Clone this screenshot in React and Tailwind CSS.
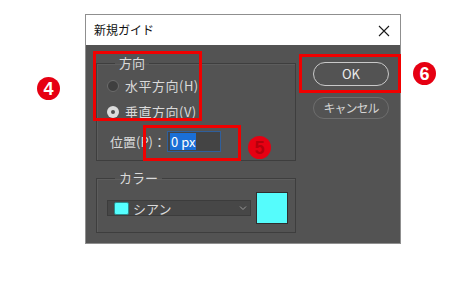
const FONT = { fontFamily: '"Noto Sans CJK JP", "Noto Sans", sans-serif' };

function Radio({ checked }) {
  return checked ? (
    <span className="flex h-[12px] w-[12px] items-center justify-center rounded-full bg-[#dcdcdc]">
      <span className="h-[4px] w-[4px] rounded-full bg-[#505050]" />
    </span>
  ) : (
    <span className="h-[12px] w-[12px] rounded-full border border-[#6b6b6b] bg-[#3f3f3f]" />
  );
}

function Badge({ n, className, digit = "text-white" }) {
  return (
    <div
      className={`absolute flex h-[23px] w-[23px] items-center justify-center rounded-full bg-[#e60012] text-[18px] font-bold leading-none ${digit} ${className}`}
      style={{ fontFamily: '"Liberation Sans", Arial, sans-serif' }}
    >
      {n}
    </div>
  );
}

export default function App() {
  return (
    <div className="relative h-[287px] w-[476px] overflow-hidden bg-white pl-[85px] pt-[14px]" style={FONT}>
      {/* Dialog */}
      <div className="flex w-[316px] flex-col border border-[#8f8f8f]">
        <div className="flex h-[30px] items-center justify-between bg-white pl-[8px] pr-[10px]">
          <span className="text-[12px] text-[#111]">新規ガイド</span>
          <svg width="12" height="12" viewBox="0 0 12 12" className="mt-[1px]">
            <path d="M1 1L11 11M11 1L1 11" stroke="#1a1a1a" strokeWidth="1.1" />
          </svg>
        </div>

        <div className="flex bg-[#535353] pb-[10px] pl-[10px] pr-[11px] pt-[10px] text-[13px] text-[#dadada]">
          <div className="flex w-[200px] flex-col gap-[9px]">
            <fieldset className="border border-[#3e3e3e] pb-[8px] pt-[5px] shadow-[inset_1px_1px_0_#5d5d5d]">
              <legend className="ml-[18px] px-[4px] leading-[16px]">方向</legend>
              <div className="flex flex-col">
                <div className="flex h-[20px] items-center gap-[6px] pl-[10px]">
                  <Radio />
                  <span className="tracking-[0.5px]">水平方向(H)</span>
                </div>
                <div className="mt-[6px] flex h-[20px] items-center gap-[6px] pl-[10px]">
                  <Radio checked />
                  <span className="tracking-[0.5px]">垂直方向(V)</span>
                </div>
                <div className="mt-[9px] flex h-[21px] items-center pl-[13px]">
                  <span className="w-[57px]">位置(P)：</span>
                  <div className="flex h-[21px] w-[54px] items-center border border-[#2f5f9c] bg-[#444] pl-[2px]">
                    <span className="bg-[#1b6fd6] px-[1px] leading-[17px] text-white">0 px</span>
                  </div>
                </div>
              </div>
            </fieldset>

            <fieldset className="border border-[#3e3e3e] pb-[8px] pt-[6px] shadow-[inset_1px_1px_0_#5d5d5d]">
              <legend className="ml-[18px] px-[4px] leading-[16px]">カラー</legend>
              <div className="flex items-center gap-[5px] pl-[10px]">
                <div className="flex h-[16px] w-[144px] items-center border border-[#3c3c3c] bg-[#474747] pl-[6px] pr-[3px]">
                  <span className="h-[13px] w-[15px] rounded-[2px] border border-[#2c8c8c] bg-[#55ffff]" />
                  <span className="ml-[4px] flex-1 leading-none">シアン</span>
                  <svg width="8" height="6" viewBox="0 0 8 6">
                    <path d="M1 1.5L4 4.5L7 1.5" fill="none" stroke="#9a9a9a" strokeWidth="1" />
                  </svg>
                </div>
                <div className="h-[32px] w-[32px] border border-[#2e2e2e] bg-[#55fcfc]" />
              </div>
            </fieldset>
          </div>

          <div className="ml-[17px] flex flex-col pt-[7px]">
            <button className="flex h-[24px] w-[76px] items-center justify-center rounded-full border-[1.5px] border-[#c9c9c9] text-[13px] text-[#ececec]">
              OK
            </button>
            <button className="mt-[11px] flex h-[22px] w-[76px] items-center justify-center rounded-full border border-[#6e6e6e] text-[12px] tracking-[-1px] text-[#d4d4d4]">
              キャンセル
            </button>
          </div>
        </div>
      </div>

      {/* Annotations */}
      <div className="absolute left-[93px] top-[51px] h-[70px] w-[109px] border-[3px] border-[#f00000]" />
      <div className="absolute left-[143px] top-[125px] h-[36px] w-[98px] border-[3px] border-[#f00000]" />
      <div className="absolute left-[299px] top-[54px] h-[39px] w-[102px] border-[3px] border-[#f00000]" />
      <Badge n="4" className="left-[37px] top-[77px]" />
      <Badge n="5" className="left-[248px] top-[136px]" digit="text-[#b4000c]" />
      <Badge n="6" className="left-[413px] top-[62px]" />
    </div>
  );
}
